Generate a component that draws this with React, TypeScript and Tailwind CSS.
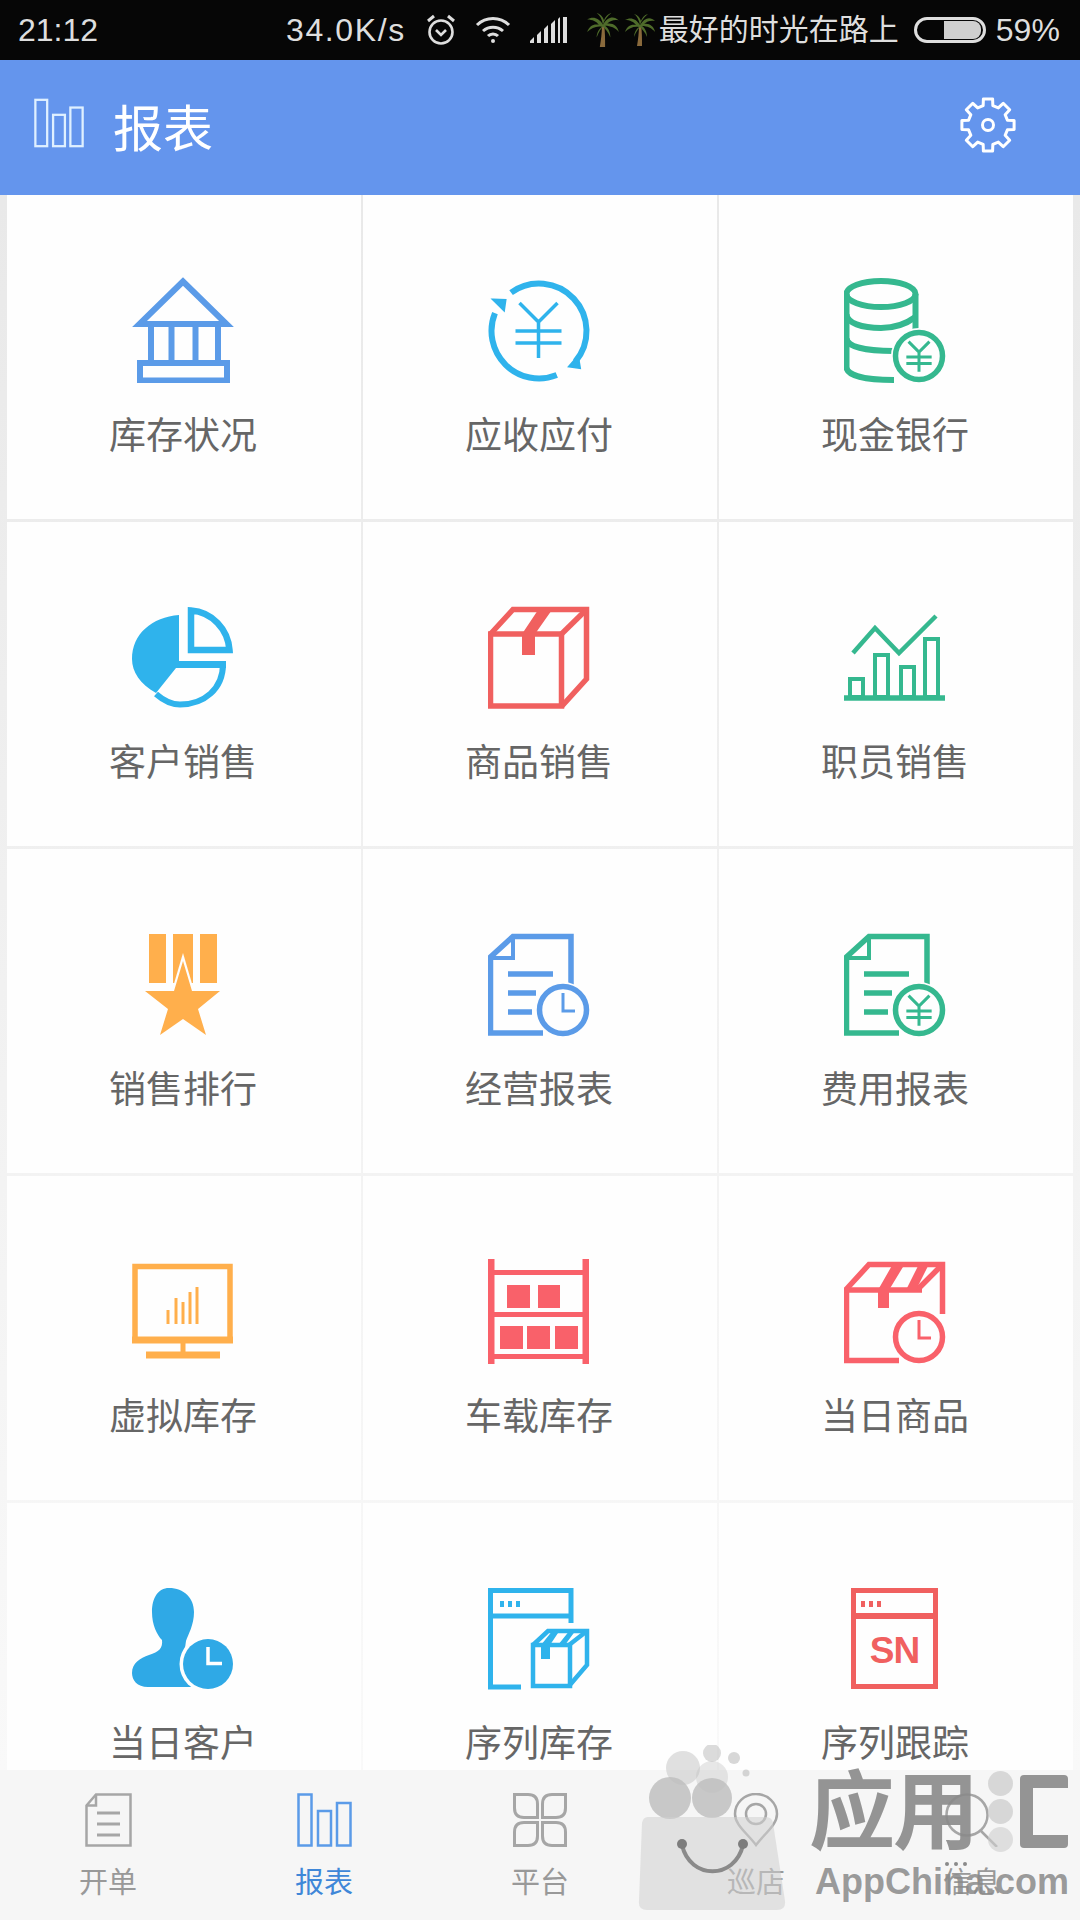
import React from "react";

const CJK = "font-['Liberation_Sans','Noto_Sans_CJK_SC',sans-serif]";
const BLUE = "#5B9BE8";
const SKY = "#2FB3EC";
const GREEN = "#35B88F";
const RED = "#F0605F";
const CORAL = "#F9616A";
const ORANGE = "#FFAF4C";

function YenMark({ cx, cy, s, color }: { cx: number; cy: number; s: number; color: string }) {
  return (
    <g stroke={color} strokeWidth={s > 0.8 ? 3.5 : 3} fill="none">
      <path d={`M${cx - 19 * s} ${cy - 28 * s}L${cx} ${cy - 9 * s}L${cx + 19 * s} ${cy - 28 * s}M${cx} ${cy - 9 * s}V${cy + 27 * s}M${cx - 23 * s} ${cy}H${cx + 23 * s}M${cx - 23 * s} ${cy + 12 * s}H${cx + 23 * s}`} />
    </g>
  );
}

function Coin({ color }: { color: string }) {
  return (
    <g>
      <circle cx="75" cy="79" r="28" fill="#fefefe" />
      <circle cx="75" cy="79" r="23.5" fill="#fefefe" stroke={color} strokeWidth="5.5" />
      <YenMark cx={75} cy={80} s={0.55} color={color} />
    </g>
  );
}

function ClockFace({ color }: { color: string }) {
  return (
    <g>
      <circle cx="75" cy="79" r="28" fill="#fefefe" />
      <circle cx="75" cy="79" r="23.5" fill="#fefefe" stroke={color} strokeWidth="5.5" />
      <path d="M75 62V80H87" fill="none" stroke={color} strokeWidth="3" />
    </g>
  );
}

function Doc({ color }: { color: string }) {
  return (
    <g fill="none" stroke={color} strokeWidth="5.5">
      <path d="M2.5 104V26L25 5.5H83V54" />
      <path d="M0 102H55" />
      <path d="M25 5.5V27H2.5" strokeWidth="4" />
      <path d="M20 43H65M20 62H48M20 81H44" />
    </g>
  );
}

const icons: Record<string, React.ReactNode> = {
  bank: (
    <g fill="none" stroke={BLUE} strokeWidth="6">
      <path d="M51 4.5L7.5 47H94.5Z" strokeMiterlimit="10" />
      <path d="M19 49V84M39.5 49V84M63.5 49V84M86 49V84" />
      <rect x="8" y="86" width="87" height="17.5" />
    </g>
  ),
  cycle: (
    <g fill="none" stroke={SKY} strokeWidth="6">
      <path d="M23.08 15.57A47.5 47.5 0 0 1 87.39 84.53" />
      <path d="M68.79 98.04A47.5 47.5 0 0 1 6.96 36.21" />
      <path d="M5 22.5L17.5 23L16 33.5Z" fill={SKY} stroke={SKY} strokeWidth="2" />
      <path d="M81 89.5L92 91L90 79Z" fill={SKY} stroke={SKY} strokeWidth="2" />
      <YenMark cx={50.5} cy={54} s={1} color={SKY} />
    </g>
  ),
  cash: (
    <g>
      <g fill="none" stroke={GREEN} strokeWidth="6">
        <ellipse cx="37" cy="17" rx="34.5" ry="13" />
        <path d="M2.5 17V90C2.5 97 16 103 50 103" />
        <path d="M71.5 17V56" />
        <path d="M2.5 37C2.5 46 18 51 37 51C50 51 62 47 71.5 40" />
        <path d="M2.5 61C2.5 69 18 74 50 74" />
      </g>
      <Coin color={GREEN} />
    </g>
  ),
  pie: (
    <g>
      <path d="M47 11C20 13 0 30 0 55C0 68 8 80 24 89L44 64V57H47Z" fill={SKY} />
      <path d="M44 60.5H94" fill="none" stroke={SKY} strokeWidth="7" />
      <path d="M91 60C91 85 72 100.5 48 100.5C40 100.5 32 97 24 90" fill="none" stroke={SKY} strokeWidth="6" />
      <path d="M59 6.5C80 8 96 25 97.5 46H59Z" fill="none" stroke={SKY} strokeWidth="6.5" />
    </g>
  ),
  box: (
    <g fill="none" stroke={RED} strokeWidth="5.5">
      <rect x="2.5" y="30" width="71" height="72" />
      <path d="M2.5 30L25 5.5H98.5V75L74 102" />
      <path d="M98.5 5.5L73.5 30" />
      <path d="M34 30L52 3H66L47 30V51H34Z" fill={RED} stroke="none" />
    </g>
  ),
  trend: (
    <g fill="none" stroke={GREEN}>
      <path d="M0 94H101" strokeWidth="5.5" />
      <rect x="6" y="75" width="13" height="18" strokeWidth="4" />
      <rect x="31" y="51" width="13" height="42" strokeWidth="4" />
      <rect x="57" y="63" width="13" height="30" strokeWidth="4" />
      <rect x="81" y="35" width="13" height="58" strokeWidth="4" />
      <path d="M9 49L31 24L55 49L92 12" strokeWidth="4.5" />
    </g>
  ),
  medal: (
    <g>
      <path d="M17 3H34V52H17ZM41 3H61V52H41ZM68 3H85V52H68Z" fill={ORANGE} />
      <path d="M51 22L41 56H61Z" fill="#fefefe" />
      <path d="M51 30L60 60H88L66 78L74 104L51 88L28 104L36 78L13 60H42Z" fill={ORANGE} />
    </g>
  ),
  docClock: (
    <g>
      <Doc color={BLUE} />
      <ClockFace color={BLUE} />
    </g>
  ),
  docCoin: (
    <g>
      <Doc color={GREEN} />
      <Coin color={GREEN} />
    </g>
  ),
  monitor: (
    <g fill="none" stroke={ORANGE}>
      <path d="M3 8.5H98V82H3Z" strokeWidth="5.5" />
      <path d="M0 82H101" strokeWidth="7" />
      <path d="M51 85V95" strokeWidth="5" />
      <path d="M14 97H88" strokeWidth="7" />
      <path d="M36 66V52M44 66V40M51 66V44M58 66V34M65 66V29" strokeWidth="3" />
    </g>
  ),
  shelf: (
    <g fill={CORAL}>
      <rect x="0" y="1" width="6.5" height="105" />
      <rect x="94.5" y="1" width="6.5" height="105" />
      <rect x="3" y="12" width="95" height="5" />
      <rect x="3" y="54" width="95" height="5" />
      <rect x="3" y="96" width="95" height="5" />
      <rect x="19" y="27" width="23" height="23" />
      <rect x="50" y="27" width="22" height="23" />
      <rect x="12" y="68" width="23" height="23" />
      <rect x="39" y="68" width="23" height="23" />
      <rect x="67" y="68" width="23" height="23" />
    </g>
  ),
  boxClock: (
    <g>
      <g fill="none" stroke={CORAL} strokeWidth="5.5">
        <path d="M2.5 33V102.5H55" />
        <path d="M0 32H78" />
        <path d="M2.5 31L25 6.5H98.5V56" />
        <path d="M98.5 6.5L73 32" />
      </g>
      <path d="M34 32L50 4H62L45 32V50H34ZM62 32L76 4H86L72 32Z" fill={CORAL} />
      <ClockFace color={CORAL} />
    </g>
  ),
  person: (
    <g fill="#2FA9E6">
      <path d="M37 3C52 3 62 13 62 27C62 40 56 50 54 56L52 70L80 102H16C5 102 0 95 0 88C0 78 8 73 17 70C27 67 31 63 30 55C25 50 20 40 20 27C20 13 26 3 37 3Z" />
      <circle cx="76" cy="79" r="28.5" fill="#fefefe" />
      <circle cx="76" cy="79" r="25" />
      <path d="M76 62V78.5H90" fill="none" stroke="#fff" strokeWidth="3.5" />
    </g>
  ),
  windowBox: (
    <g>
      <g fill="none" stroke={SKY} strokeWidth="4.5">
        <path d="M2.5 104V5.5H83V38" strokeWidth="5" />
        <path d="M0 31H84" strokeWidth="5" />
        <path d="M0 102H33" strokeWidth="5" />
        <path d="M12 19H16M20 19H24M28 19H32" strokeWidth="6" />
        <rect x="45" y="60" width="37" height="41" />
        <path d="M45 60L60 46H99V80L81 101" />
        <path d="M99 46L81 60" />
      </g>
      <path d="M53 60L65 45H72L62 60V74H53ZM70 60L82 45H88L77 60Z" fill={SKY} />
    </g>
  ),
  sn: (
    <g>
      <g fill="none" stroke={RED} strokeWidth="5">
        <rect x="9.5" y="5.5" width="82" height="96" />
        <path d="M8 31H93" strokeWidth="6" />
        <path d="M17 19H21M25 19H29M33 19H37" strokeWidth="6" />
      </g>
      <text x="50.5" y="78" textAnchor="middle" fontSize="37" fontWeight="700" fill={RED} fontFamily="'Liberation Sans',sans-serif" letterSpacing="-1">SN</text>
    </g>
  ),
};

const cells: [string, string][] = [
  ["bank", "库存状况"], ["cycle", "应收应付"], ["cash", "现金银行"],
  ["pie", "客户销售"], ["box", "商品销售"], ["trend", "职员销售"],
  ["medal", "销售排行"], ["docClock", "经营报表"], ["docCoin", "费用报表"],
  ["monitor", "虚拟库存"], ["shelf", "车载库存"], ["boxClock", "当日商品"],
  ["person", "当日客户"], ["windowBox", "序列库存"], ["sn", "序列跟踪"],
];

function Bars({ color, className }: { color: string; className: string }) {
  return (
    <svg viewBox="0 0 55 54" className={className} fill="none" stroke={color} strokeWidth="2.5">
      <rect x="1.5" y="1.5" width="13" height="51" />
      <rect x="21" y="18" width="13" height="34.5" />
      <rect x="40" y="10" width="13.5" height="42.5" />
    </svg>
  );
}

function gearPath(): string {
  const cx = 30;
  const cy = 30;
  const pts: string[] = [];
  for (let i = 0; i < 8; i++) {
    const a = i * 45;
    const add = (deg: number, r: number) => {
      const t = ((a + deg - 90) * Math.PI) / 180;
      pts.push(`${(cx + r * Math.cos(t)).toFixed(2)} ${(cy + r * Math.sin(t)).toFixed(2)}`);
    };
    add(-14, 20);
    add(-10, 26.5);
    add(10, 26.5);
    add(14, 20);
  }
  return `M${pts.join("L")}Z`;
}

function Gear() {
  return (
    <svg viewBox="0 0 60 60" className="ml-auto -mt-[5px] w-[60px] h-[60px]" fill="none" stroke="#fff" strokeWidth="3">
      <path d={gearPath()} strokeLinejoin="round" />
      <circle cx="30" cy="30" r="5.5" />
    </svg>
  );
}

function TabIcon({ name }: { name: string }) {
  if (name === "doc")
    return (
      <svg viewBox="0 0 47 54" className="w-[47px] h-[54px]" fill="none" stroke="#a6a6a6" strokeWidth="2.5">
        <path d="M1.5 12.5L11 1.5H45.5V52.5H1.5Z" />
        <path d="M11 1.5V12.5H1.5" />
        <path d="M12 20H35M12 31H35M12 42H35" strokeWidth="3" />
      </svg>
    );
  if (name === "bars") return <Bars color="#5B9BE8" className="w-[55px] h-[54px]" />;
  if (name === "grid")
    return (
      <svg viewBox="0 0 54 54" className="w-[54px] h-[54px]" fill="none" stroke="#a6a6a6" strokeWidth="3">
        <path d="M1.5 1.5H15Q24.5 1.5 24.5 11V24.5H11Q1.5 24.5 1.5 15Z" />
        <path d="M52.5 1.5H39Q29.5 1.5 29.5 11V24.5H43Q52.5 24.5 52.5 15Z" />
        <path d="M1.5 52.5H15Q24.5 52.5 24.5 43V29.5H11Q1.5 29.5 1.5 39Z" />
        <path d="M52.5 52.5H39Q29.5 52.5 29.5 43V29.5H43Q52.5 29.5 52.5 39Z" />
      </svg>
    );
  if (name === "pin")
    return (
      <svg viewBox="0 0 46 54" className="w-[46px] h-[54px]" fill="none" stroke="#a6a6a6" strokeWidth="2.5">
        <path d="M23 52C14 40 2 32 2 21A21 20 0 0 1 44 21C44 32 32 40 23 52Z" />
        <circle cx="23" cy="21" r="10" />
        <path d="M16 21H30" stroke="#f6f6f6" strokeWidth="3" />
      </svg>
    );
  return (
    <svg viewBox="0 0 54 54" className="w-[54px] h-[54px]" fill="none" stroke="#a6a6a6" strokeWidth="2.5">
      <circle cx="22" cy="22" r="20.5" />
      <path d="M36 38L52 54" />
    </svg>
  );
}

const tabs = [
  { icon: "doc", label: "开单", active: false },
  { icon: "bars", label: "报表", active: true },
  { icon: "grid", label: "平台", active: false },
  { icon: "pin", label: "巡店", active: false },
  { icon: "search", label: "信息", active: false },
];

function Palm({ className }: { className: string }) {
  return (
    <svg viewBox="0 0 36 34" className={className}>
      <path d="M17 12C17 20 16 27 15 33H20C20 26 20 18 19 12Z" fill="#8a6a3c" />
      <path d="M18 12C14 5 8 4 3 7C8 7 12 9 14 12C9 11 5 13 3 19C7 15 12 13 17 14C14 16 12 20 12 24C14 19 16 16 18 14C20 16 23 19 25 24C25 19 23 15 20 13C25 13 30 15 33 19C32 13 27 10 22 11C25 8 29 7 33 8C28 3 22 5 18 12Z" fill="#4e6b2a" />
      <path d="M18 12C17 7 15 3 12 1C16 2 18 5 19 8C20 5 22 2 26 1C22 4 19 8 18 12Z" fill="#4e6b2a" />
    </svg>
  );
}

function StatusBar() {
  return (
    <div className={`h-[60px] bg-[#060606] flex items-center text-[#dedede] text-[32px] leading-none pl-[18px] pr-[18px] ${CJK}`}>
      <span>21:12</span>
      <span className="ml-[188px] tracking-[1.6px]">34.0K/s</span>
      <svg viewBox="0 0 30 32" className="ml-[20px] w-[30px] h-[32px]" fill="none" stroke="#dedede" strokeWidth="2.6">
        <circle cx="15" cy="18" r="11.5" />
        <path d="M10 16L15 21L20 16" />
        <path d="M2 7L8 2M28 7L22 2" strokeWidth="3" />
      </svg>
      <svg viewBox="0 0 36 26" className="ml-[19px] w-[36px] h-[26px]" fill="none" stroke="#dedede" strokeWidth="3">
        <path d="M2 8A23 23 0 0 1 34 8" />
        <path d="M8 14A15 15 0 0 1 28 14" />
        <path d="M13 19A7 7 0 0 1 23 19" />
        <circle cx="18" cy="24" r="2" fill="#dedede" stroke="none" />
      </svg>
      <svg viewBox="0 0 37 26" className="ml-[19px] w-[37px] h-[26px]" fill="#dedede">
        <path d="M0 24L4 20V26H0ZM7 18L11 14V26H7ZM14 12L18 8V26H14ZM21 7L25 3V26H21ZM28 2L30 0V26H28ZM33 0H37V26H33Z" />
      </svg>
      <Palm className="ml-[17px] w-[38px] h-[36px]" />
      <Palm className="w-[36px] h-[36px]" />
      <span className="ml-[1px] text-[30px]">最好的时光在路上</span>
      <span className="ml-[15px] w-[72px] h-[26px] rounded-full border-[3px] border-[#dedede] flex items-center justify-end pr-[2px]">
        <span className="w-[37px] h-[18px] rounded-r-[8px] bg-[#cfcfcf]" />
      </span>
      <span className="ml-[10px]">59%</span>
    </div>
  );
}

function Header() {
  return (
    <header className={`h-[135px] bg-[#6495ED] flex items-center pl-[34px] pr-[62px] ${CJK}`}>
      <Bars color="#dff0ff" className="w-[50px] h-[50px] -mt-[10px]" />
      <h1 className="ml-[29px] text-[50px] font-normal leading-none text-white mt-[5px]">报表</h1>
      <Gear />
    </header>
  );
}

function Watermark() {
  return (
    <div className="absolute left-[630px] top-[1745px] w-[450px] h-[175px] pointer-events-none">
      <svg viewBox="0 0 170 175" className="absolute left-0 top-0 w-[170px] h-[175px]">
        <g fill="#bdbdbd" fillOpacity="0.6">
          <circle cx="53" cy="23" r="17" fillOpacity="0.45" />
          <circle cx="82" cy="8" r="9" fillOpacity="0.55" />
          <circle cx="104" cy="13" r="6" />
          <circle cx="116" cy="28" r="3.5" />
          <circle cx="82" cy="32" r="16" fillOpacity="0.35" />
          <circle cx="40" cy="53" r="21" fillOpacity="0.8" />
          <circle cx="82" cy="53" r="20" fillOpacity="0.8" />
          <path d="M18 72H136Q142 72 143 78L155 156Q156 165 147 165H17Q8 165 9 156L12 78Q13 72 18 72Z" fill="#cfcfcf" fillOpacity="0.55" />
        </g>
        <path d="M52 100C60 135 105 135 113 100" fill="none" stroke="#8a8a8a" strokeWidth="4" />
        <circle cx="52" cy="99" r="5" fill="#7d7d7d" />
        <circle cx="113" cy="99" r="5" fill="#7d7d7d" />
      </svg>
      <div className={`absolute left-[179px] top-[18px] text-[86px] leading-[100px] font-bold text-[#8a8a8a]/90 tracking-[-2px] ${CJK}`}>应用</div>
      <div className="absolute left-[358px] top-[26px] w-[25px] h-[25px] rounded-full bg-[#cfcfcf]/80" />
      <div className="absolute left-[358px] top-[54px] w-[25px] h-[25px] rounded-full bg-[#cfcfcf]/80" />
      <div className="absolute left-[358px] top-[82px] w-[25px] h-[25px] rounded-full bg-[#cfcfcf]/60" />
      <div className="absolute left-[390px] top-[30px] w-[48px] h-[73px] rounded-[4px] border-l-[13px] border-t-[13px] border-b-[13px] border-[#8a8a8a]/90" />
      <div className="absolute left-[315px] top-[117px] w-[22px] h-[6px] flex justify-between">
        <span className="w-[4px] h-[4px] rounded-full bg-[#8a8a8a]" />
        <span className="w-[4px] h-[4px] rounded-full bg-[#8a8a8a]" />
        <span className="w-[4px] h-[4px] rounded-full bg-[#8a8a8a]" />
      </div>
      <div className="absolute left-[185px] top-[112px] text-[36px] leading-[50px] font-bold text-[#8a8a8a]/85 font-['Liberation_Sans',sans-serif] whitespace-nowrap">AppChina.com</div>
    </div>
  );
}

export default function App() {
  return (
    <div className={`relative w-[1080px] h-[1920px] flex flex-col overflow-hidden bg-white ${CJK}`}>
      <StatusBar />
      <Header />
      <main className="flex-1 overflow-hidden bg-linear-to-b from-[#e9e9e9] to-[#f9f9f9] pl-[7px] pr-[7px]">
        <div className="grid grid-cols-3 gap-x-[2px] gap-y-[3px]">
          {cells.map(([icon, label]) => (
            <div key={label} className="h-[324px] bg-[#fefefe] flex flex-col items-center pt-[82px] pr-[2px]">
              <svg viewBox="0 0 102 106" className="w-[102px] h-[106px]">{icons[icon]}</svg>
              <span className="mt-[29px] text-[37px] leading-[50px] text-[#666]">{label}</span>
            </div>
          ))}
        </div>
      </main>
      <nav className="h-[150px] bg-[#f6f6f6] grid grid-cols-5">
        {tabs.map((t) => (
          <div key={t.label} className="flex flex-col items-center pt-[23px]">
            <div className="h-[54px] flex items-center"><TabIcon name={t.icon} /></div>
            <span className={`mt-[18px] text-[29px] leading-[36px] ${t.active ? "text-[#3F87D8]" : "text-[#999]"}`}>{t.label}</span>
          </div>
        ))}
      </nav>
      <Watermark />
    </div>
  );
}
